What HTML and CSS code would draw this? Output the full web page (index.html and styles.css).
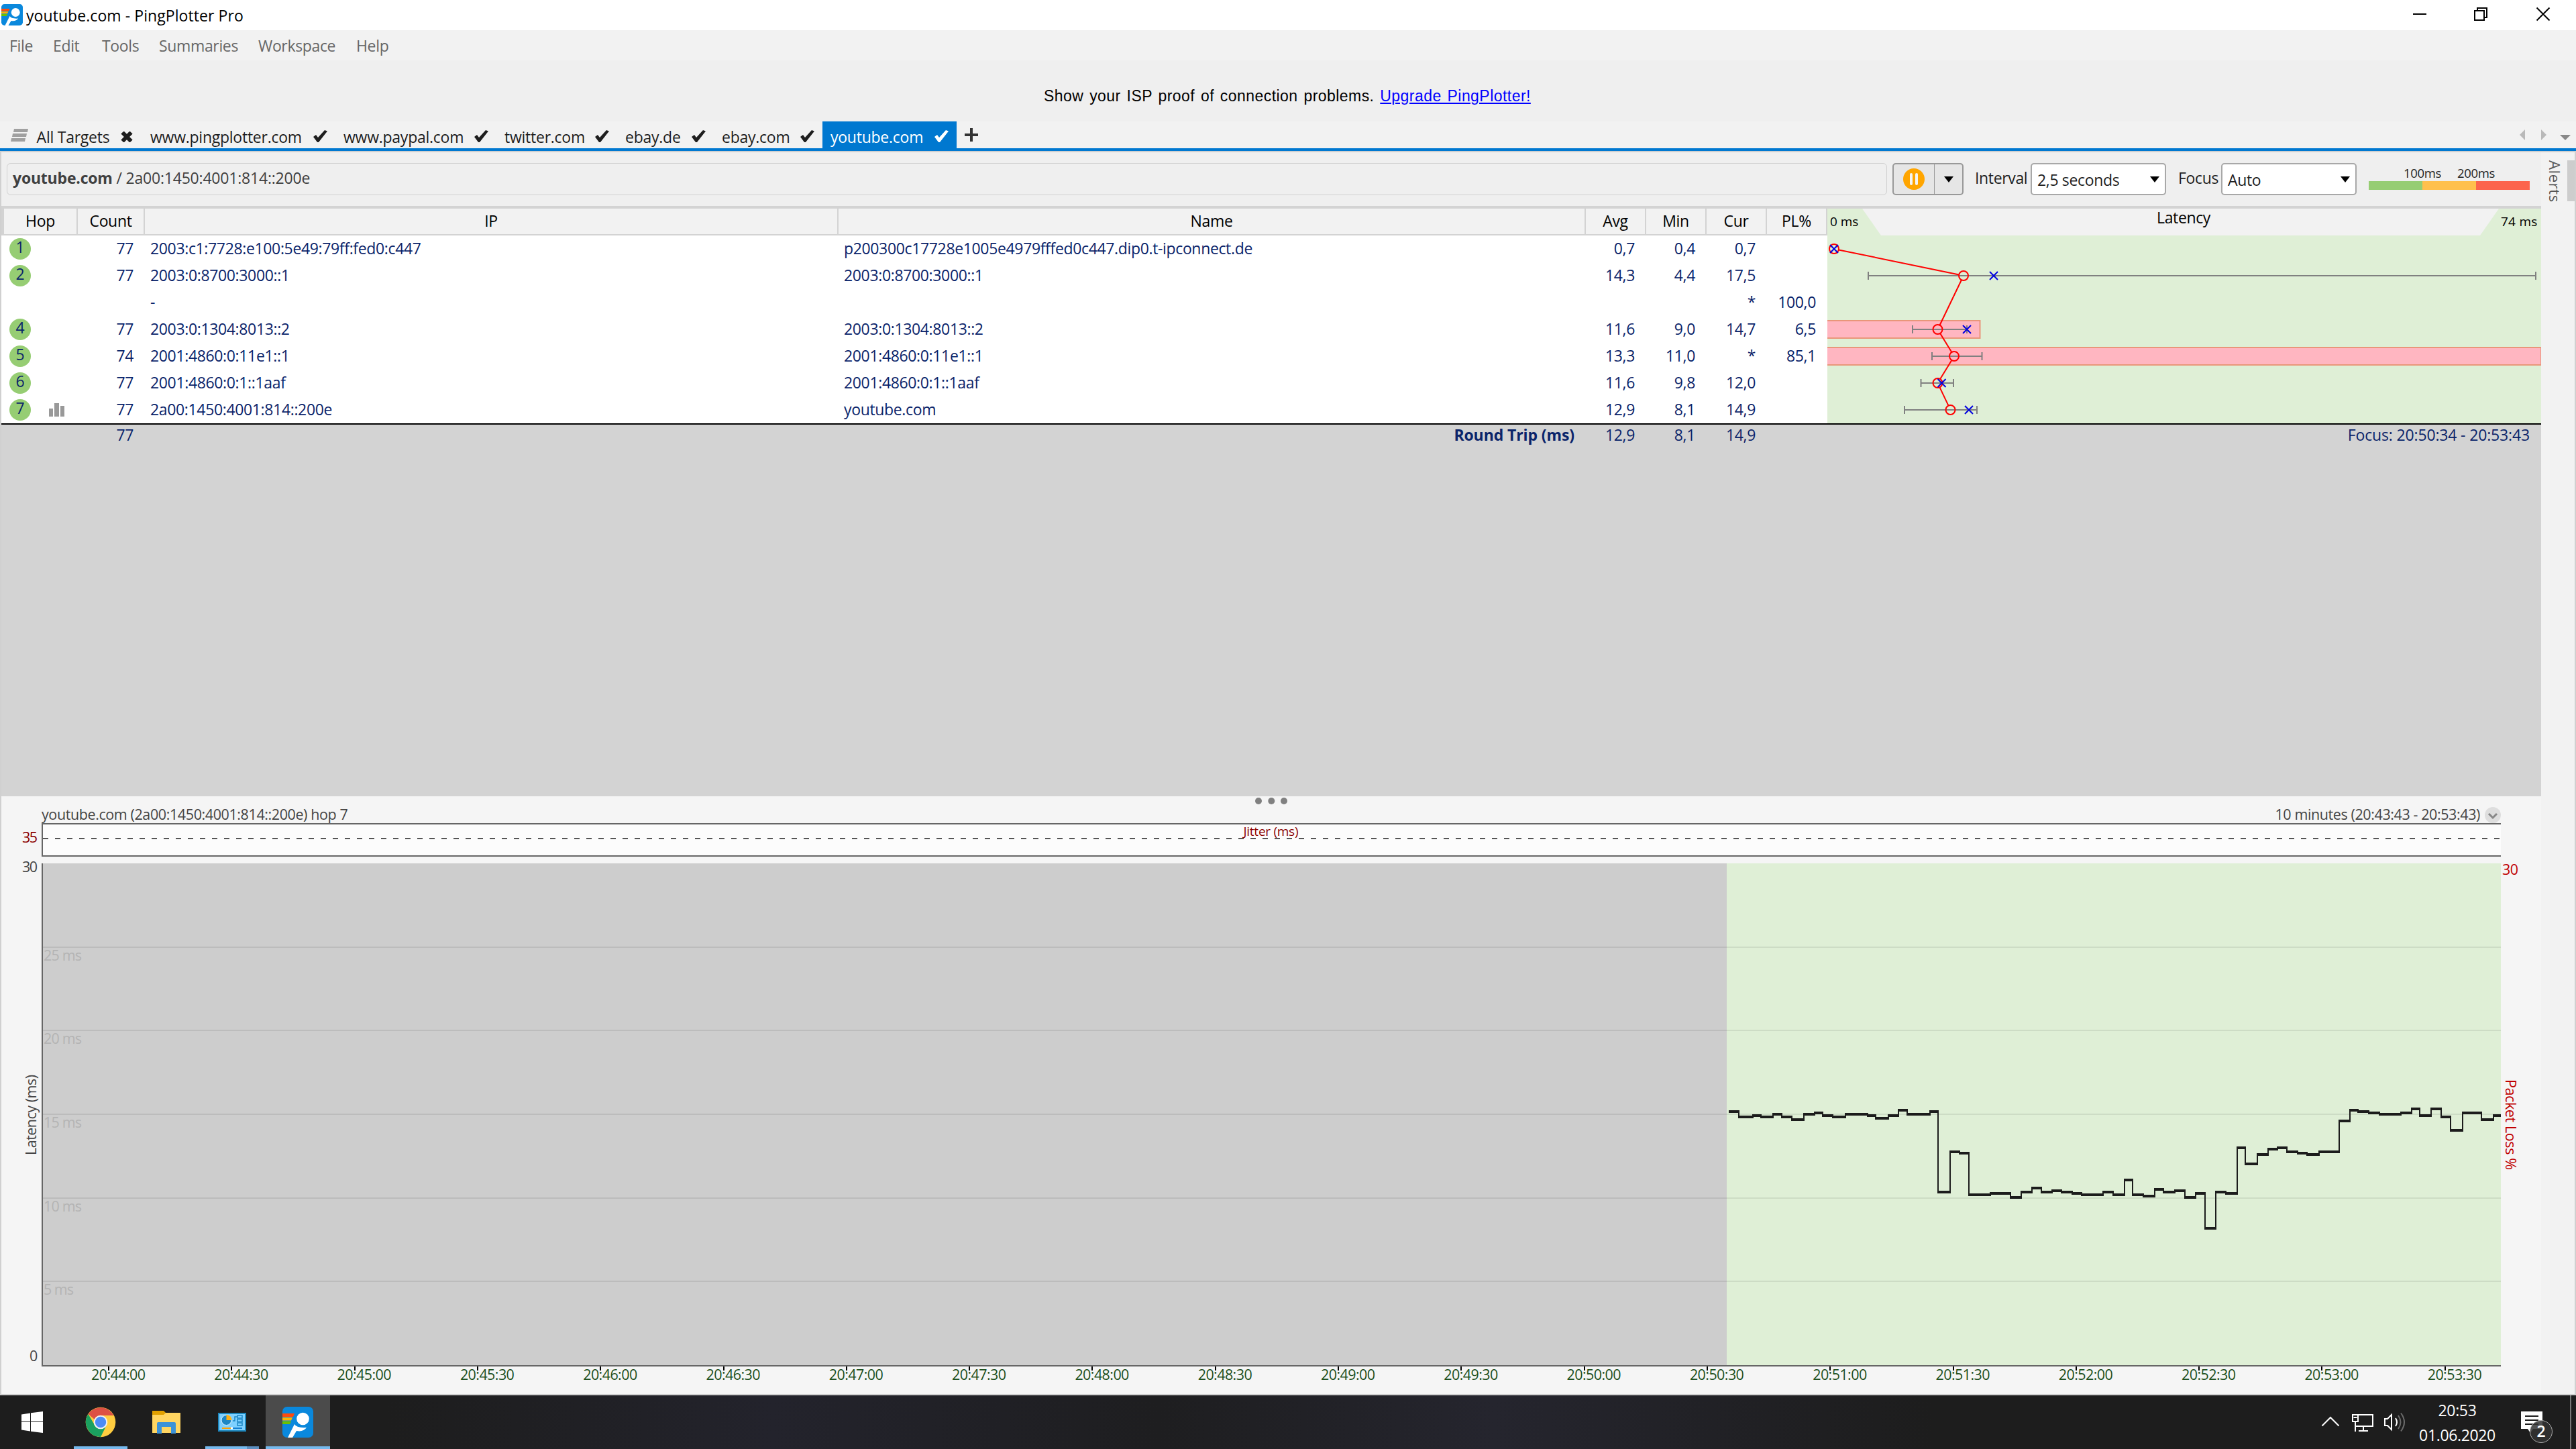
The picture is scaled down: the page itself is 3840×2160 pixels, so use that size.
FILE: index.html
```html
<!DOCTYPE html>
<html lang="en">
<head>
    <meta charset="UTF-8">
    <title>youtube.com - PingPlotter Pro</title>
    <link rel="stylesheet" href="styles.css">
</head>
<body>
    <svg class="defs" width="0" height="0">
        <symbol id="logo" viewBox="0 0 46 46">
            <rect width="46" height="46" rx="7" fill="#0a88dc"/>
            <path d="M0 10h18l-2 5H0z" fill="#ff4a0c"/>
            <path d="M0 16h15l-2 4.500H0z" fill="#ffb400"/>
            <path d="M0 21.500h13L11 26H0z" fill="#6cc000"/>
            <circle cx="30.500" cy="18" r="9.300" fill="#fff"/>
            <path d="M18 26q3 6 18 5q-5 7-15 5L15 46H8z" fill="#fff"/>
        </symbol>
        <symbol id="check" viewBox="0 0 22 18">
            <path d="M1 10l4-3 3 4L18 0l4 1.500L9 18H7z" fill="currentColor"/>
        </symbol>
    </svg>

    <header class="titlebar">
        <svg class="app-icon"><use href="#logo"/></svg>
        <span class="app-title">youtube.com - PingPlotter Pro</span>
        <svg class="window-buttons" viewBox="3590 0 220 45" fill="none" stroke="#000" stroke-width="2">
            <path d="M3597 21h20M3689 16h14v14h-14zM3693 16v-4h14v14h-4"/>
            <path d="M3781.500 11.500l19 19M3800.500 11.500l-19 19"/>
        </svg>
    </header>

    <nav class="menubar">
        <span>File</span><span>Edit</span><span>Tools</span><span>Summaries</span><span>Workspace</span><span>Help</span>
    </nav>

    <div class="banner">
        <p>Show your ISP proof of connection problems. <a href="#">Upgrade PingPlotter!</a></p>
    </div>

    <div class="tabs">
        <div class="tab tab-all">
            <svg width="26" height="19" viewBox="0 0 26 19"><path d="M5 0h21l-1 5H4zM3 7h21l-1 5H2zM1 14h21l-1 5H0z" fill="#a0a0a0"/></svg>
            <span>All Targets</span>
            <svg class="cross" width="18" height="16" viewBox="0 0 18 16"><path d="M2.500 1.500l13 13M15.500 1.500l-13 13" stroke="#1e1e1e" stroke-width="6"/></svg>
        </div>
        <div class="tab"><span>www.pingplotter.com</span><svg class="check"><use href="#check"/></svg></div>
        <div class="tab"><span>www.paypal.com</span><svg class="check"><use href="#check"/></svg></div>
        <div class="tab"><span>twitter.com</span><svg class="check"><use href="#check"/></svg></div>
        <div class="tab"><span>ebay.de</span><svg class="check"><use href="#check"/></svg></div>
        <div class="tab"><span>ebay.com</span><svg class="check"><use href="#check"/></svg></div>
        <div class="tab active"><span>youtube.com</span><svg class="check"><use href="#check"/></svg></div>
        <svg class="add-tab" width="20" height="20" viewBox="0 0 20 20"><path d="M10 0v20M0 10h20" stroke="#333" stroke-width="4"/></svg>
        <svg class="tab-arrows" width="78" height="16" viewBox="0 0 78 16">
            <path d="M8 0v16L0 8zM32 0v16l8-8z" fill="#b9b9b9"/>
            <path d="M60 8h16l-8 8z" fill="#888"/>
        </svg>
    </div>

    <main class="workspace">
        <div class="content">
            <div class="toolbar">
                <div class="address"><b>youtube.com</b> / 2a00:1450:4001:814::200e</div>
                <div class="pause-button">
                    <svg width="60" height="44" viewBox="0 0 60 44">
                        <circle cx="30" cy="22" r="16" fill="#ffa500"/>
                        <path d="M26 15v14M34 15v14" stroke="#f4f4f4" stroke-width="4" stroke-linecap="round"/>
                    </svg>
                    <div class="pause-more"><i class="arrow"></i></div>
                </div>
                <span class="label label-interval">Interval</span>
                <div class="select"><span>2,5 seconds</span><i class="arrow"></i></div>
                <span class="label label-focus">Focus</span>
                <div class="select"><span>Auto</span><i class="arrow"></i></div>
                <div class="legend">
                    <div class="legend-labels"><span>100ms</span><span>200ms</span></div>
                    <div class="legend-bar"><i class="good"></i><i class="warn"></i><i class="bad"></i></div>
                </div>
            </div>

            <div class="trace">
                <div class="hops">
                    <div class="row head">
                        <span>Hop</span><span>Count</span><span>IP</span><span>Name</span><span>Avg</span><span>Min</span><span>Cur</span><span>PL%</span>
                    </div>
                    <div class="row"><span><b class="hop">1</b></span><span>77</span><span>2003:c1:7728:e100:5e49:79ff:fed0:c447</span><span>p200300c17728e1005e4979fffed0c447.dip0.t-ipconnect.de</span><span>0,7</span><span>0,4</span><span>0,7</span><span></span></div>
                    <div class="row"><span><b class="hop">2</b></span><span>77</span><span>2003:0:8700:3000::1</span><span>2003:0:8700:3000::1</span><span>14,3</span><span>4,4</span><span>17,5</span><span></span></div>
                    <div class="row"><span></span><span></span><span>-</span><span></span><span></span><span></span><span>*</span><span>100,0</span></div>
                    <div class="row"><span><b class="hop">4</b></span><span>77</span><span>2003:0:1304:8013::2</span><span>2003:0:1304:8013::2</span><span>11,6</span><span>9,0</span><span>14,7</span><span>6,5</span></div>
                    <div class="row"><span><b class="hop">5</b></span><span>74</span><span>2001:4860:0:11e1::1</span><span>2001:4860:0:11e1::1</span><span>13,3</span><span>11,0</span><span>*</span><span>85,1</span></div>
                    <div class="row"><span><b class="hop">6</b></span><span>77</span><span>2001:4860:0:1::1aaf</span><span>2001:4860:0:1::1aaf</span><span>11,6</span><span>9,8</span><span>12,0</span><span></span></div>
                    <div class="row"><span><b class="hop">7</b><svg class="bars" width="23" height="20" viewBox="0 0 23 20"><path d="M0 8h6v12H0zM8 0h7v20H8zM17 4h6v16h-6z" fill="#999"/></svg></span><span>77</span><span>2a00:1450:4001:814::200e</span><span>youtube.com</span><span>12,9</span><span>8,1</span><span>14,9</span><span></span></div>
                </div>
                <!-- 14.2px per ms, one hop every 40px -->
                <svg class="latency" width="1064" height="320" viewBox="2724 311 1064 320">
                    <rect x="2724" y="311" width="1064" height="320" fill="#dfefd6"/>
                    <path d="M2776 311h949l-28 40h-893z" fill="#f2f2f2"/>
                    <text class="small" x="2728" y="337" textLength="42">0 ms</text>
                    <text class="title" x="3255" y="333" text-anchor="middle" textLength="80">Latency</text>
                    <text class="small" x="3728" y="337" textLength="54">74 ms</text>
                    <g fill="#ffb6c1" stroke="#e9967a" stroke-width="2">
                        <path d="M2724 478h227.500v26H2724"/>
                        <path d="M2724 518h1064v26H2724"/>
                    </g>
                    <g id="hopGraph" fill="none" stroke-width="2"></g>
                </svg>
            </div>
            <div class="row total">
                <span></span><span>77</span><span></span><span><b>Round Trip (ms)</b></span><span>12,9</span><span>8,1</span><span>14,9</span><span></span><span>Focus: 20:50:34 - 20:53:43</span>
            </div>

            <div class="timeline">
                <div class="timeline-head">
                    <span>youtube.com (2a00:1450:4001:814::200e) hop 7</span>
                    <svg class="splitter" width="48" height="10"><g fill="#808080"><circle cx="5" cy="5" r="5"/><circle cx="24.300" cy="5" r="5"/><circle cx="43" cy="5" r="5"/></g></svg>
                    <span class="range">10 minutes (20:43:43 - 20:53:43)</span>
                    <svg width="24" height="24" viewBox="0 0 24 24"><circle cx="12" cy="12" r="12" fill="#dedede"/><path d="M6 10l6 6 6-6" fill="none" stroke="#888" stroke-width="3"/></svg>
                </div>
                <svg class="plot" width="3786" height="851" viewBox="2 1227 3786 851">
                    <rect x="62" y="1227" width="3666" height="50" fill="#fcfcfc"/>
                    <path d="M3728 1228H63v48h3665" fill="none" stroke="#666" stroke-width="2"/>
                    <path d="M64 1250h3664" stroke="#555" stroke-width="2" stroke-dasharray="8 10"/>
                    <text class="jitter" x="1853.500" y="1246" textLength="82">Jitter (ms)</text>
                    <text class="dark-red" x="33" y="1256" textLength="23">35</text>
                    <text x="33" y="1300" textLength="23">30</text>
                    <text x="44" y="2029">0</text>
                    <rect x="64" y="1287" width="2510" height="748" fill="#cdcdcd"/>
                    <rect x="2574" y="1287" width="1154" height="748" fill="#dfefd6"/>
                    <g id="grid"></g>
                    <path d="M63 1287v749h3665" fill="none" stroke="#666" stroke-width="2"/>
                    <g id="steps" fill="#1c1c1c"></g>
                    <g id="timeAxis"></g>
                    <text class="side" transform="translate(54 1722) rotate(-90)" textLength="120">Latency (ms)</text>
                    <text class="side red" transform="translate(3735 1609) rotate(90)" textLength="135">Packet Loss %</text>
                    <text class="red" x="3730" y="1304" textLength="24">30</text>
                </svg>
            </div>
        </div>
        <aside class="alerts"><span>Alerts</span><i></i></aside>
    </main>

    <footer class="taskbar">
        <div class="task start">
            <svg width="32" height="32" viewBox="0 0 32 32"><path d="M0 4.500L13 2.500V15H0zM14 2.300L32 0v15H14zM0 16h13v13.500L0 27.500zM14 16h18v16l-18-2.300z" fill="#fff"/></svg>
        </div>
        <div class="task running">
            <svg width="46" height="46" viewBox="0 0 46 46">
                <circle cx="23" cy="23" r="22.300" fill="#ffcd40"/>
                <path d="M4.500 11A22.300 22.300 0 0 1 42.500 13H23a10 10 0 0 0-9 6z" fill="#dd5144"/>
                <path d="M4.500 11A22.300 22.300 0 0 0 23 45.300L32 27a10 10 0 0 1-17.500 1z" fill="#1aa15f"/>
                <circle cx="23" cy="23" r="10.300" fill="#f1f1f1"/>
                <circle cx="23" cy="23" r="8.200" fill="#4c8bf5"/>
            </svg>
        </div>
        <div class="task">
            <svg width="42" height="36" viewBox="0 0 42 36">
                <path d="M0 1h17l4 4-4 3H0z" fill="#e0a000"/>
                <path d="M0 7h17l3-3h22v30H0z" fill="#ffd561"/>
                <path d="M7 35V20q0-2 2-2h24q2 0 2 2v15h-7V25H14v10z" fill="#3c92d8"/>
            </svg>
        </div>
        <div class="task running grouped">
            <svg width="42" height="28" viewBox="0 0 42 28">
                <rect x="1" y="1" width="40" height="26" fill="#7ed0ff" stroke="#1d87bd" stroke-width="2"/>
                <circle cx="12.500" cy="11" r="7.500" fill="#1d87c5" stroke="#e6f6ff" stroke-width="1"/>
                <path d="M12.500 11V3a8 8 0 0 1 8 8z" fill="#ffb014"/>
                <g fill="none" stroke="#1d87c5" stroke-width="1.500"><rect x="29" y="4" width="7" height="4"/><rect x="29" y="9.500" width="7" height="4"/><rect x="29" y="15" width="7" height="4"/><path d="M22 12h3V6h4"/></g>
                <path d="M6 23h13" stroke="#ffa000" stroke-width="2"/><path d="M20 23h16" stroke="#1680d0" stroke-width="2"/>
                <rect x="19" y="21.500" width="3" height="3" fill="#fff"/>
            </svg>
        </div>
        <div class="task running current"><svg width="46" height="46"><use href="#logo"/></svg></div>
        <svg class="tray" width="130" height="30" viewBox="3458 2105 130 30" fill="none" stroke="#fff" stroke-width="2">
            <path d="M3461.500 2125.500l12.500-12.500 12.500 12.500"/>
            <path d="M3511 2109h26v17h-26M3523 2127v6M3516 2133h14M3507 2109h8v10h-8zM3511 2119v15M3508.500 2113h5"/>
            <path d="M3555 2115h4l6-6v22l-6-6h-4zM3571 2114q4 6 0 12"/>
            <path d="M3575 2110q7 10 0 20M3579 2106.500q10 13.500 0 27" stroke="#6a6a6a"/>
        </svg>
        <div class="clock"><span>20:53</span><span>01.06.2020</span></div>
        <div class="notifications">
            <svg width="32" height="32" viewBox="0 0 32 32"><path d="M0 0h32v26H18l-4 6-4-6H0z" fill="#fff"/><path d="M6 7h20M6 13h20M6 19h20" stroke="#1d1d1d" stroke-width="2"/></svg>
            <b class="badge">2</b>
        </div>
    </footer>
    <script src="script.js"></script>
</body>
</html>
```
FILE: styles.css
```css
* {
    box-sizing: border-box;
}
body {
    margin: 0;
    width: 3840px;
    height: 2160px;
    overflow: hidden;
    background: #efefef;
    font-family: "Open Sans", "Noto Sans", sans-serif;
    font-size: 23px;
    letter-spacing: -0.35px;
    color: #1e1e1e;
}
svg {
    display: block;
    flex: none;
}
.defs {
    position: absolute;
}
.titlebar {
    display: flex;
    height: 45px;
    padding-left: 2px;
    background: #fff;
    color: #000;
}
.app-icon {
    width: 32px;
    height: 32px;
    margin-top: 6px;
}
.app-title {
    margin-left: 5px;
    letter-spacing: 0.07px;
    line-height: 46px;
}
.window-buttons {
    width: 220px;
    height: 45px;
    margin-left: auto;
    margin-right: 30px;
}
.menubar {
    display: grid;
    grid-template-columns: 65px 73px 85px 148px 146px 80px;
    height: 45px;
    padding-left: 14px;
    background: #f2f2f2;
    color: #666;
    line-height: 47px;
}
.banner {
    height: 91px;
    padding-left: 1556px;
    color: #000;
    font-family: "Liberation Sans", Arial, sans-serif;
    line-height: 106px;
    white-space: nowrap;
}
.banner p {
    margin: 0;
    word-spacing: 2px;
    letter-spacing: 0.45px;
}
.banner a {
    color: #0000ff;
}

/* tabs */
.tabs {
    display: grid;
    grid-template-columns: 212px 288px 240px 180px 144px 162px 200px 40px 1fr;
    align-items: center;
    height: 44px;
    border-bottom: 4px solid #0078d0;
    background: #f2f2f2;
}
.tab {
    display: flex;
    align-items: center;
    justify-content: space-between;
    height: 40px;
    padding: 0 12px;
    letter-spacing: -0.25px;
    line-height: 40px;
}
.tab span {
    margin-top: 6px;
}
.tab-all {
    padding: 0 14px 0 16px;
}
.tab-all span {
    margin-right: 4px;
}
.tab.active {
    background: #0078d0;
    color: #fff;
}
.check {
    width: 22px;
    height: 18px;
    margin-top: 4px;
}
.cross {
    margin-top: 6px;
}
.add-tab {
    margin-left: 12px;
}
.tab-arrows {
    margin-left: auto;
    margin-right: 6px;
}

.workspace {
    display: flex;
    height: 1855px;
    border: 2px solid #d0d0d0;
}
.content {
    display: flex;
    flex-direction: column;
    width: 3786px;
    background: #d3d3d3;
}

/* toolbar */
.toolbar {
    display: flex;
    align-items: center;
    height: 80px;
    padding-left: 8px;
    background: #efefef;
    color: #1e1e1e;
}
.address {
    width: 2803px;
    height: 48px;
    padding-left: 8px;
    border: 1px solid #d0d0d0;
    border-radius: 6px;
    color: #404040;
    letter-spacing: -0.2px;
    line-height: 43px;
}
.pause-button {
    display: flex;
    width: 106px;
    height: 48px;
    margin-left: 8px;
    border: 2px solid #999;
    border-radius: 5px;
    background: #e6e6e6;
}
.pause-more {
    display: flex;
    align-items: center;
    justify-content: center;
    flex: 1;
    border-left: 1px solid #999;
}
.arrow {
    border: 7px solid transparent;
    border-top: 9px solid #000;
    border-bottom: 0;
}
.label {
    margin-top: -4px;
}
.label-interval {
    width: 83px;
    margin-left: 17px;
}
.label-focus {
    width: 64px;
    margin-left: 18px;
}
.select {
    display: flex;
    align-items: center;
    justify-content: space-between;
    width: 202px;
    height: 48px;
    padding: 0 8px;
    border: 2px solid #a8a8a8;
    border-radius: 5px;
    background: #fff;
}
.select span {
    margin-top: 2px;
}
.legend {
    width: 240px;
    margin-left: 18px;
}
.legend-labels {
    display: flex;
    justify-content: center;
    height: 25px;
    font-size: 18.5px;
    line-height: 25px;
}
.legend-labels span {
    width: 80px;
    text-align: center;
}
.legend-bar {
    display: flex;
    height: 13px;
    margin-bottom: 7px;
}
.legend-bar i {
    flex: 1;
}
.good {
    background: #96cd73;
}
.warn {
    background: #ffc04d;
}
.bad {
    background: #fc644d;
}

/* hop table */
.trace {
    display: flex;
    border-top: 4px solid #d3d3d3;
    border-bottom: 2px solid #000;
    height: 326px;
}
.hops {
    width: 2722px;
    background: #fff;
}
.row {
    display: grid;
    grid-template-columns: 114px 100px 1034px 1114px 90px 90px 90px 90px;
    height: 40px;
    color: #0a246a;
    line-height: 39px;
    white-space: nowrap;
}
.row > span {
    padding: 0 17px 0 8px;
    text-align: right;
}
.row > span:nth-child(1) {
    display: flex;
    align-items: center;
    padding-left: 12px;
}
.row > span:nth-child(3),
.row > span:nth-child(4) {
    text-align: left;
}
.row.head {
    border-bottom: 2px solid #d3d3d3;
    background: #f2f2f2;
    color: #000;
    line-height: 36px;
}
.row.head > span {
    display: block;
    padding: 0;
    border-right: 2px solid #d3d3d3;
    text-align: center;
}
.row.head > span:first-child {
    border-left: 4px solid #d3d3d3;
}
.hop {
    width: 32px;
    height: 32px;
    border-radius: 50%;
    background: #96cd73;
    font-weight: normal;
    line-height: 27px;
    text-align: center;
}
.bars {
    margin-left: 27px;
}
.row.total {
    grid-template-columns: 114px 100px 1034px 1114px 90px 90px 90px 90px 1064px;
    height: 554px;
    line-height: 30px;
}
.row.total > span:nth-child(4) {
    letter-spacing: -0.1px;
    text-align: right;
}
.row.total > span:nth-child(9) {
    letter-spacing: -0.15px;
}
.latency {
    overflow: visible;
}
.latency .small {
    font-size: 19px;
}

/* timeline */
.timeline {
    height: 891px;
    background: #f5f5f5;
    color: #444;
    font-size: 21.5px;
}
.timeline-head {
    position: relative;
    display: flex;
    align-items: center;
    height: 40px;
    padding: 15px 60px 0 60px;
    letter-spacing: -0.4px;
    line-height: 24px;
}
.timeline-head > span {
    margin-top: -2px;
}
.splitter {
    position: absolute;
    left: 1869px;
    top: 2px;
}
.timeline-head .range {
    margin-left: auto;
    margin-right: 7px;
}
.plot text {
    fill: #444;
    letter-spacing: 0;
}
.plot .jitter {
    fill: #8b0000;
    font-size: 19px;
}
.plot .dark-red {
    fill: #8b0000;
}
.plot .red {
    fill: #c00000;
}
.plot .grid-label {
    fill: #b4b4b4;
}
.plot .time {
    fill: #1d501d;
}

.alerts {
    display: flex;
    width: 50px;
    padding-top: 10px;
    background: #f2f2f2;
    color: #555;
}
.alerts span {
    width: 39px;
    height: 64px;
    padding-top: 2px;
    font-size: 22px;
    letter-spacing: 0.6px;
    line-height: 36px;
    writing-mode: vertical-rl;
}
.alerts i {
    width: 11px;
    height: 61px;
    margin-top: 2px;
    background: #cdcdcd;
}

/* taskbar */
.taskbar {
    display: flex;
    height: 80px;
    background: linear-gradient(90deg, #1d1d1d 15%, #23232c 30%, #1e1e20 45%, #25252e 58%, #1d1d1d 75%);
    color: #fff;
}
.task {
    display: flex;
    align-items: center;
    justify-content: center;
    width: 96px;
    margin-right: 2px;
}
.task.start {
    margin-right: 6px;
}
.task.running {
    background: linear-gradient(#76b9ed, #76b9ed) 8px bottom / 80px 4px no-repeat;
}
.task.grouped {
    background: linear-gradient(90deg, #76b9ed 62px, #5c8fc0 62px) 8px bottom / 80px 4px no-repeat;
}
.task.current {
    border-bottom: 4px solid #76b9ed;
    padding-top: 4px;
    background: #4b4b4b;
}
.tray {
    margin-left: auto;
    margin-top: 25px;
}
.clock {
    display: flex;
    flex-direction: column;
    width: 150px;
    padding-top: 4px;
    line-height: 37px;
    text-align: center;
}
.notifications {
    position: relative;
    width: 95px;
    padding: 24px 0 0 20px;
    border-right: 2px solid #777;
    margin-right: 7px;
}
.badge {
    position: absolute;
    left: 33px;
    top: 37px;
    width: 34px;
    height: 34px;
    border: 1px solid #aaa;
    border-radius: 50%;
    background: rgba(50, 50, 50, 0.85);
    font-weight: 600;
    line-height: 30px;
    text-align: center;
}
```
FILE: script.js
```javascript
const NS = 'http://www.w3.org/2000/svg';

function add(parent, tag, attrs, text) {
    const el = document.createElementNS(NS, tag);
    for (const key in attrs) el.setAttribute(key, attrs[key]);
    if (text) el.textContent = text;
    parent.appendChild(el);
}

// y, avg, cur, min, max
const hops = [
    [371, 2734, 2734, null, null],
    [411, 2927, 2972, 2785, 3780],
    [491, 2888.5, 2932, 2851, 2932],
    [531, 2913, null, 2880, 2954.5],
    [571, 2888.5, 2894.5, 2863.5, 2912],
    [611, 2907.5, 2935, 2839, 2947]
];
const hopGraph = document.getElementById('hopGraph');
hops.forEach(([y, avg, cur, min, max], i) => {
    if (min) {
        add(hopGraph, 'path', { d: `M${min} ${y - 6}v12M${max} ${y - 6}v12M${min} ${y}H${max}`, stroke: '#808080' });
    }
    if (i > 0) {
        // connect the circle edges, not the centres
        const [py, px] = hops[i - 1];
        const len = Math.hypot(avg - px, y - py);
        const dx = (avg - px) / len * 7, dy = (y - py) / len * 7;
        add(hopGraph, 'path', { d: `M${px + dx} ${py + dy}L${avg - dx} ${y - dy}`, stroke: '#ff0000' });
    }
    add(hopGraph, 'circle', { cx: avg, cy: y, r: 7, stroke: '#ff0000' });
    if (cur) {
        add(hopGraph, 'path', { d: `M${cur - 6} ${y - 6}l12 12M${cur + 6} ${y - 6}l-12 12`, stroke: '#0000e0' });
    }
});

const grid = document.getElementById('grid');
[[1412, 25], [1536, 20], [1661, 15], [1786, 10], [1910, 5]].forEach(([y, ms]) => {
    add(grid, 'rect', { x: 64, y: y - 1, width: 3664, height: 2, fill: '#000', 'fill-opacity': 0.08 });
    add(grid, 'text', { class: 'grid-label', x: 65, y: y + 20, textLength: ms > 5 ? 57 : 45 }, ms + ' ms');
});

const timeAxis = document.getElementById('timeAxis');
for (let i = 0; i < 20; i++) {
    const x = 162 + i * 183.3;
    const min = 44 + Math.floor(i / 2);
    add(timeAxis, 'rect', { x: Math.round(x) - 1, y: 2037, width: 2, height: 6, fill: '#000' });
    add(timeAxis, 'text', { class: 'time', x: x - 26, y: 2057, textLength: 81 }, `20:${min}:${i % 2 ? '30' : '00'}`);
}

// start x and y of every latency sample
const samples = [
    [2578, 1657], [2592, 1665], [2613, 1663], [2625, 1665], [2643, 1661], [2656, 1665], [2671, 1669],
    [2689, 1661], [2705, 1659], [2717, 1663], [2732, 1665], [2751, 1661], [2784, 1663], [2796, 1667],
    [2815, 1663], [2830, 1655], [2843, 1661], [2877, 1657], [2889, 1777], [2907, 1717], [2921, 1719],
    [2935, 1781], [2967, 1779], [2997, 1785], [3013, 1777], [3029, 1771], [3043, 1777], [3059, 1775],
    [3073, 1777], [3089, 1779], [3103, 1781], [3135, 1777], [3150, 1781], [3167, 1759], [3179, 1781],
    [3195, 1783], [3212, 1773], [3225, 1777], [3242, 1775], [3257, 1785], [3273, 1779], [3287, 1831],
    [3303, 1777], [3318, 1779], [3335, 1711], [3347, 1735], [3365, 1721], [3381, 1713], [3395, 1711],
    [3409, 1717], [3425, 1719], [3439, 1721], [3457, 1717], [3487, 1671], [3503, 1655], [3515, 1657],
    [3531, 1659], [3547, 1661], [3579, 1659], [3595, 1653], [3607, 1663], [3624, 1653], [3639, 1665],
    [3653, 1685], [3671, 1659], [3699, 1669], [3717, 1663]
];
const steps = document.getElementById('steps');
samples.forEach(([x, y], i) => {
    const next = samples[i + 1];
    const end = next ? next[0] + 1 : 3728;
    add(steps, 'rect', { x: x - 1, y: y - 2, width: end - x + 1, height: 4 });
    if (next) {
        add(steps, 'rect', { x: next[0] - 1, y: Math.min(y, next[1]), width: 2, height: Math.abs(next[1] - y) });
    }
});
```
